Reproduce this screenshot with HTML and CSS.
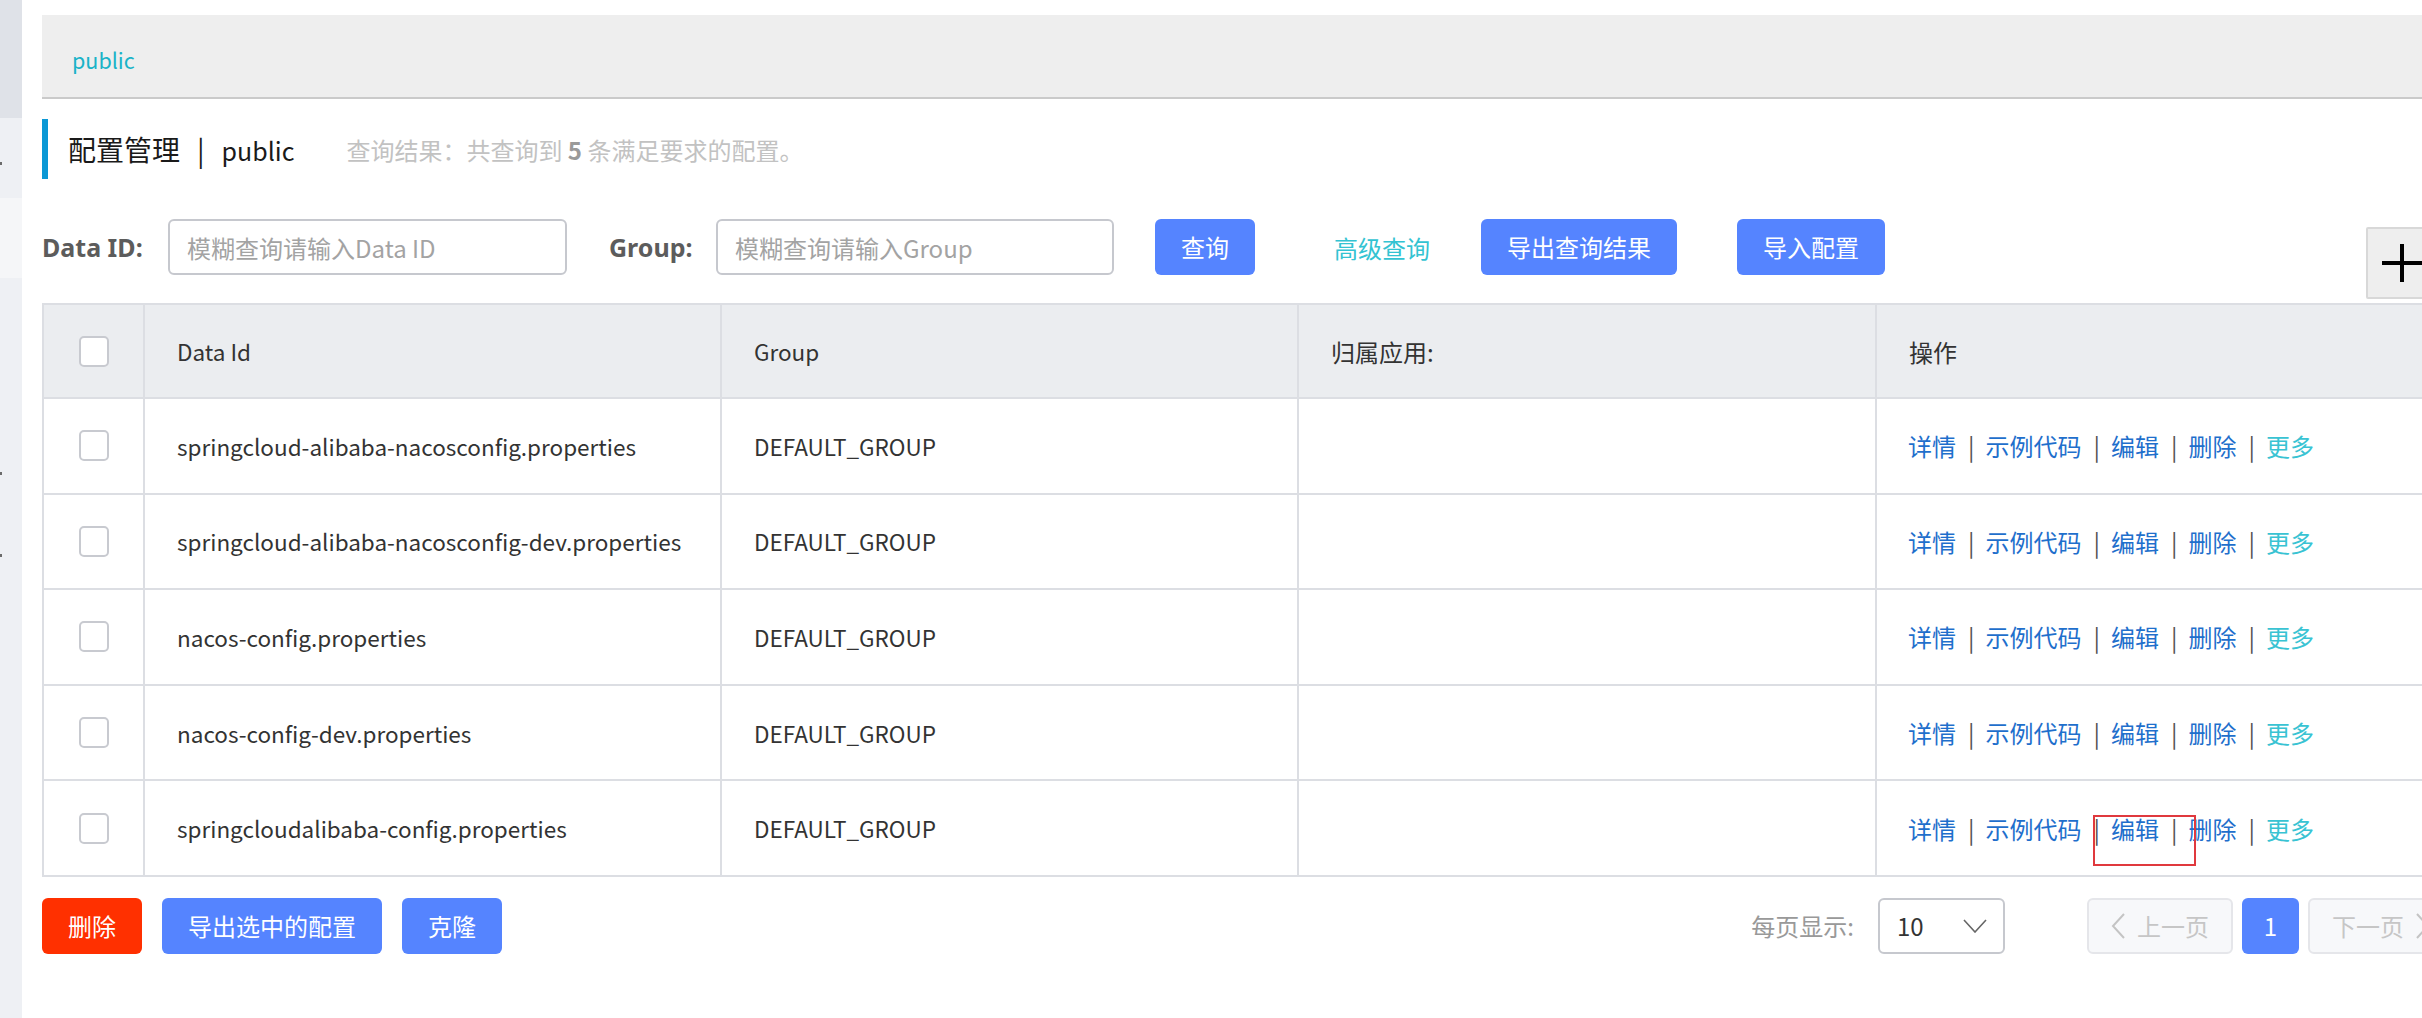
FILE: index.html
```html
<!DOCTYPE html>
<html lang="zh-CN">
<head>
<meta charset="utf-8">
<title>配置管理</title>
<link rel="stylesheet" href="styles.css">
</head>
<body>
<div class="app">
  <aside class="sidebar">
    <div class="sb-1"></div>
    <div class="sb-2"><span class="sb-mark m1"></span></div>
    <div class="sb-3"></div>
    <div class="sb-4"><span class="sb-mark m2"></span><span class="sb-mark m3"></span></div>
  </aside>
  <main class="main">
    <div class="ns-bar"><span class="ns-item">public</span></div>

    <div class="title-row">
      <h1 class="title">配置管理<span class="title-sep">|</span><span class="title-ns">public</span></h1>
      <span class="query-result">查询结果：共查询到 <strong>5</strong> 条满足要求的配置。</span>
    </div>

    <div class="search-row">
      <label class="field-label label-dataid">Data ID:</label>
      <input class="text-input" type="text" placeholder="模糊查询请输入Data ID">
      <label class="field-label label-group">Group:</label>
      <input class="text-input input-group" type="text" placeholder="模糊查询请输入Group">
      <button class="btn btn-primary btn-query">查询</button>
      <a class="adv-link">高级查询</a>
      <button class="btn btn-primary">导出查询结果</button>
      <button class="btn btn-primary btn-import">导入配置</button>
    </div>

    <div class="table">
      <div class="tr thead">
        <div class="td td-check"><span class="checkbox"></span></div>
        <div class="td td-latin">Data Id</div>
        <div class="td td-latin">Group</div>
        <div class="td">归属应用:</div>
        <div class="td">操作</div>
      </div>
      <div class="tr">
        <div class="td td-check"><span class="checkbox"></span></div>
        <div class="td td-latin">springcloud-alibaba-nacosconfig.properties</div>
        <div class="td td-latin">DEFAULT_GROUP</div>
        <div class="td"></div>
        <div class="td td-ops"><a class="op">详情</a><span class="sep">|</span><a class="op">示例代码</a><span class="sep">|</span><a class="op">编辑</a><span class="sep">|</span><a class="op">删除</a><span class="sep">|</span><a class="op op-more">更多</a></div>
      </div>
      <div class="tr">
        <div class="td td-check"><span class="checkbox"></span></div>
        <div class="td td-latin">springcloud-alibaba-nacosconfig-dev.properties</div>
        <div class="td td-latin">DEFAULT_GROUP</div>
        <div class="td"></div>
        <div class="td td-ops"><a class="op">详情</a><span class="sep">|</span><a class="op">示例代码</a><span class="sep">|</span><a class="op">编辑</a><span class="sep">|</span><a class="op">删除</a><span class="sep">|</span><a class="op op-more">更多</a></div>
      </div>
      <div class="tr">
        <div class="td td-check"><span class="checkbox"></span></div>
        <div class="td td-latin">nacos-config.properties</div>
        <div class="td td-latin">DEFAULT_GROUP</div>
        <div class="td"></div>
        <div class="td td-ops"><a class="op">详情</a><span class="sep">|</span><a class="op">示例代码</a><span class="sep">|</span><a class="op">编辑</a><span class="sep">|</span><a class="op">删除</a><span class="sep">|</span><a class="op op-more">更多</a></div>
      </div>
      <div class="tr">
        <div class="td td-check"><span class="checkbox"></span></div>
        <div class="td td-latin">nacos-config-dev.properties</div>
        <div class="td td-latin">DEFAULT_GROUP</div>
        <div class="td"></div>
        <div class="td td-ops"><a class="op">详情</a><span class="sep">|</span><a class="op">示例代码</a><span class="sep">|</span><a class="op">编辑</a><span class="sep">|</span><a class="op">删除</a><span class="sep">|</span><a class="op op-more">更多</a></div>
      </div>
      <div class="tr">
        <div class="td td-check"><span class="checkbox"></span></div>
        <div class="td td-latin">springcloudalibaba-config.properties</div>
        <div class="td td-latin">DEFAULT_GROUP</div>
        <div class="td"></div>
        <div class="td td-ops"><a class="op">详情</a><span class="sep">|</span><a class="op">示例代码</a><span class="sep">|</span><a class="op">编辑</a><span class="sep">|</span><a class="op">删除</a><span class="sep">|</span><a class="op op-more">更多</a></div>
      </div>
    </div>

    <div class="footer">
      <div class="footer-actions">
        <button class="btn btn-danger">删除</button>
        <button class="btn btn-primary">导出选中的配置</button>
        <button class="btn btn-primary">克隆</button>
      </div>
      <div class="pager-area">
        <span class="page-size-label">每页显示:</span>
        <div class="select">
          <span class="select-value">10</span>
          <svg class="select-arrow" width="24" height="14" viewBox="0 0 24 14"><polyline points="1,1 12,13 23,1" fill="none" stroke="#666" stroke-width="1.6"/></svg>
        </div>
        <div class="pager">
          <button class="pg-btn pg-disabled pg-prev"><svg width="15" height="26" viewBox="0 0 15 26"><polyline points="13,1 2,13 13,25" fill="none" stroke="#c4c4c4" stroke-width="2"/></svg><span>上一页</span></button>
          <button class="pg-btn pg-current">1</button>
          <button class="pg-btn pg-disabled pg-next"><span>下一页</span><svg width="15" height="26" viewBox="0 0 15 26"><polyline points="2,1 13,13 2,25" fill="none" stroke="#c4c4c4" stroke-width="2"/></svg></button>
        </div>
      </div>
    </div>
  </main>
</div>

<button class="add-btn"><svg width="40" height="40" viewBox="0 0 40 40"><line x1="0" y1="20" x2="40" y2="20" stroke="#000" stroke-width="4"/><line x1="20" y1="1" x2="20" y2="39" stroke="#000" stroke-width="4"/></svg></button>
<div class="annotate-box"></div>
</body>
</html>
```

FILE: styles.css
```css
* { box-sizing: border-box; }
html, body { margin: 0; padding: 0; }
body {
  width: 2422px;
  height: 1018px;
  overflow: hidden;
  position: relative;
  background: #ffffff;
  font-family: "Noto Sans CJK SC", "Noto Sans", sans-serif;
  font-size: 24px;
  color: #333333;
}
button { font-family: inherit; }

.app { display: flex; height: 1018px; }

/* sidebar strip */
.sidebar { width: 22px; flex-shrink: 0; display: flex; flex-direction: column; }
.sb-1 { height: 118px; background: #dfe2e8; }
.sb-2 { height: 80px; background: #eef0f4; }
.sb-3 { height: 80px; background: #f5f6f8; }
.sb-4 { flex: 1; background: #eef0f4; }
.sb-mark { display: block; width: 2px; height: 3px; background: #6b6b6b; }
.sb-2 .m1 { margin-top: 44px; }
.sb-4 .m2 { margin-top: 194px; }
.sb-4 .m3 { margin-top: 79px; }

.main { flex-shrink: 0; width: 2412px; margin-left: 20px; padding-top: 15px; }

/* namespace bar */
.ns-bar {
  height: 84px;
  background: #eeeeee;
  border-bottom: 2px solid #cacaca;
  padding-left: 30px;
  display: flex;
  align-items: center;
  padding-top: 8px;
}
.ns-item { color: #1ab3c8; font-size: 21.5px; line-height: 30px; }

/* title */
.title-row {
  margin-top: 20px;
  height: 60px;
  border-left: 6px solid #0b98d5;
  padding-left: 20px;
  display: flex;
  align-items: center;
}
.title { margin: 0; font-size: 28px; font-weight: 400; color: #1a1a1a; line-height: 60px; }
.title-sep { margin: 0 17px; }
.title-ns { font-size: 25px; }
.query-result { margin-left: 52px; font-size: 24px; color: #c2c2c2; }
.query-result strong { color: #9a9a9a; font-weight: 700; }

/* search row */
.search-row { margin-top: 40px; height: 56px; display: flex; align-items: center; }
.field-label {
  font-family: "Noto Sans", sans-serif;
  font-weight: 700;
  font-size: 25px;
  color: #5c5c5c;
}
.label-dataid { width: 126px; }
.label-group { width: 107px; margin-left: 42px; }
.text-input {
  width: 399px;
  height: 56px;
  border: 2px solid #c6c8ce;
  border-radius: 6px;
  padding: 0 17px;
  font-family: inherit;
  font-size: 24px;
  color: #333;
  background: #fff;
  outline: none;
}
.input-group { width: 398px; }
.text-input::placeholder { color: #a3a3a3; }

.btn {
  height: 56px;
  padding: 0 26px;
  border: none;
  border-radius: 6px;
  font-size: 24px;
  color: #ffffff;
  line-height: 56px;
}
.btn-primary { background: #5584ff; }
.btn-danger { background: #ff3000; }
.btn-query { margin-left: 41px; }
.adv-link { margin-left: 79px; margin-right: 51px; color: #33c3d2; font-size: 24px; }
.btn-import { margin-left: 60px; }

/* table */
.table { margin-top: 28px; border-top: 2px solid #dcdee3; border-left: 2px solid #dcdee3; }
.tr {
  display: grid;
  grid-template-columns: 101px 577px 577px 578px 577px;
  height: 95.6px;
  border-bottom: 2px solid #dcdee3;
}
.thead { height: 94px; background: #ebedf0; }
.td {
  border-right: 2px solid #dcdee3;
  padding-left: 32px;
  display: flex;
  align-items: center;
  white-space: nowrap;
  color: #333333;
}
.td-latin { font-size: 22.5px; }
.td-check { padding-left: 0; justify-content: center; }
.td-ops { padding-left: 31px; }
.checkbox {
  display: block;
  width: 30px;
  height: 31px;
  border: 2px solid #c8cad0;
  border-radius: 5px;
  background: #ffffff;
}
.op { color: #1f6fcc; }
.op-more { color: #39c3d3; }
.sep { color: #555555; margin: 0 11px 0 12px; }

/* footer */
.footer { margin-top: 21px; height: 56px; display: flex; align-items: center; justify-content: space-between; }
.footer-actions { display: flex; gap: 20px; }
.pager-area { display: flex; align-items: center; }
.page-size-label { color: #999999; font-size: 24px; }
.select {
  margin-left: 24px;
  width: 127px;
  height: 56px;
  border: 2px solid #c6c8ce;
  border-radius: 6px;
  display: flex;
  align-items: center;
  justify-content: space-between;
  padding: 0 16px 0 17px;
}
.select-value { color: #333333; font-size: 24px; }
.pager { margin-left: 82px; display: flex; gap: 9px; }
.pg-btn {
  height: 56px;
  border-radius: 6px;
  font-size: 24px;
  display: flex;
  align-items: center;
  justify-content: center;
  gap: 11px;
  padding: 0;
}
.pg-disabled { width: 146px; background: #f7f8fa; border: 2px solid #e5e6ea; color: #c6c6c6; }
.pg-current { width: 57px; background: #5584ff; border: none; color: #ffffff; }

/* overlays */
.add-btn {
  position: absolute;
  left: 2366px;
  top: 227px;
  width: 72px;
  height: 72px;
  background: #eeeeee;
  border: 2px solid #d8d8d8;
  border-radius: 2px;
  padding: 0;
  display: flex;
  align-items: center;
  justify-content: center;
}
.annotate-box {
  position: absolute;
  left: 2093px;
  top: 815px;
  width: 103px;
  height: 51px;
  border: 2px solid #e0393e;
}
```
